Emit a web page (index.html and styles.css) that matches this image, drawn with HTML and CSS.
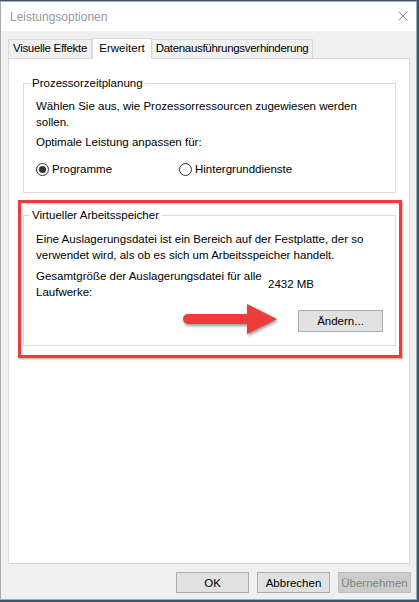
FILE: index.html
```html
<!DOCTYPE html>
<html lang="de">
<head>
<meta charset="utf-8">
<title>Leistungsoptionen</title>
<link rel="stylesheet" href="styles.css">
</head>
<body>
<div class="window">
  <div class="titlebar">
    <span class="title">Leistungsoptionen</span>
    <svg class="close" width="10" height="10" viewBox="0 0 10 10"><path d="M0.5 0.5L9.5 9.5M9.5 0.5L0.5 9.5" stroke="#8f8f8f" stroke-width="1" fill="none"/></svg>
  </div>
  <div class="dialog">
    <div class="tabs">
      <div class="tab tab-visual">Visuelle Effekte</div>
      <div class="tab tab-active">Erweitert</div>
      <div class="tab tab-dep">Datenausführungsverhinderung</div>
    </div>
    <div class="panel">
      <fieldset class="group group-cpu">
        <legend>Prozessorzeitplanung</legend>
        <p class="text">Wählen Sie aus, wie Prozessorressourcen zugewiesen werden sollen.</p>
        <p class="text text-follow">Optimale Leistung anpassen für:</p>
        <div class="radios">
          <label class="radio radio-first"><span class="dot dot-checked"></span>Programme</label>
          <label class="radio"><span class="dot"></span>Hintergrunddienste</label>
        </div>
      </fieldset>
      <div class="highlight">
        <fieldset class="group group-vm">
          <legend>Virtueller Arbeitsspeicher</legend>
          <p class="text">Eine Auslagerungsdatei ist ein Bereich auf der Festplatte, der so verwendet wird, als ob es sich um Arbeitsspeicher handelt.</p>
          <div class="size-row">
            <span class="size-label">Gesamtgröße der Auslagerungsdatei für alle Laufwerke:</span>
            <span class="size-value">2432 MB</span>
          </div>
          <div class="btn-row"><button class="btn btn-change">Ändern...</button></div>
        </fieldset>
        <svg class="arrow" width="100" height="38" viewBox="0 0 100 38">
          <g class="arrow-shape">
            <rect x="2" y="12" width="68" height="10" rx="5" ry="5" fill="#ee3b3b"/>
            <path d="M66 2 L96 17 L66 32 Z" fill="#ee3b3b"/>
          </g>
        </svg>
      </div>
    </div>
    <div class="footer">
      <button class="btn btn-foot">OK</button>
      <button class="btn btn-foot">Abbrechen</button>
      <button class="btn btn-foot" disabled>Übernehmen</button>
    </div>
  </div>
</div>
</body>
</html>
```

FILE: styles.css
```css
html, body {
  margin: 0;
  padding: 0;
  background: #3d5670;
  height: 602px;
  overflow: hidden;
}

body {
  font-family: "Liberation Sans", Arial, sans-serif;
  font-size: 11.5px;
  color: #000;
}

.window {
  box-sizing: border-box;
  width: 417px;
  height: 599px;
  margin-top: 1px;
  border: 1px solid #aaaaaa;
  background: #f0f0f0;
  display: flex;
  flex-direction: column;
}

.titlebar {
  height: 29px;
  flex: none;
  background: #ffffff;
  display: flex;
  align-items: center;
  justify-content: space-between;
  padding: 0 8px 0 9px;
}

.title {
  font-size: 12px;
  color: #999999;
  line-height: 16px;
}

.close {
  display: block;
  margin-bottom: 1px;
}

.dialog {
  flex: 1;
  display: flex;
  flex-direction: column;
  padding: 7px 6px 6px 7px;
}

.tabs {
  display: flex;
  align-items: flex-end;
  height: 21px;
  margin-bottom: -1px;
  position: relative;
  z-index: 1;
}

.tab {
  box-sizing: border-box;
  height: 19px;
  border: 1px solid #d9d9d9;
  border-bottom: none;
  background: #f0f0f0;
  text-align: center;
  white-space: nowrap;
  letter-spacing: -0.3px;
  line-height: 17px;
  margin-bottom: 1px;
}

.tab-visual {
  width: 84px;
}

.tab-active {
  width: 60px;
  height: 21px;
  background: #ffffff;
  line-height: 18px;
  margin-bottom: 0;
  letter-spacing: 0;
}

.tab-dep {
  width: 161px;
  border-left: none;
}

.panel {
  box-sizing: border-box;
  height: 506px;
  border: 1px solid #d9d9d9;
  background: #ffffff;
  padding-top: 16px;
}

.group {
  margin: 0 13px 0 14px;
  padding: 7px 12px 15px 12px;
  border: 1px solid #dcdcdc;
  min-width: 0;
}

.group legend {
  padding: 0 2px;
  margin-left: -6px;
  line-height: 16px;
}

.text {
  margin: 0;
  line-height: 16px;
}

.text-follow {
  margin-top: 4px;
}

.radios {
  display: flex;
  align-items: center;
  height: 16px;
  margin-top: 11px;
}

.radio {
  display: flex;
  align-items: center;
  line-height: 16px;
}

.radio-first {
  width: 143px;
}

.dot {
  box-sizing: border-box;
  width: 13px;
  height: 13px;
  border: 1px solid #333333;
  border-radius: 50%;
  margin-right: 3px;
  display: flex;
  align-items: center;
  justify-content: center;
  background: #ffffff;
}

.dot-checked::after {
  content: "";
  width: 7px;
  height: 7px;
  border-radius: 50%;
  background: #333333;
}

.highlight {
  position: relative;
  margin: 7px 7px 0 9px;
  border: 3px solid #ec3d3d;
  padding: 4px 3px 9px 2px;
  box-shadow: 1px 1px 2px rgba(0, 0, 0, 0.35), inset 1px 1px 2px rgba(0, 0, 0, 0.2);
}

.highlight .group {
  margin: 0;
  padding: 8px 12px 13px 12px;
}

.size-row {
  display: flex;
  align-items: center;
  margin-top: 5px;
}

.size-label {
  width: 232px;
  line-height: 16px;
}

.size-value {
  line-height: 16px;
}

.btn-row {
  display: flex;
  justify-content: flex-end;
  margin-top: 10px;
}

.btn {
  box-sizing: border-box;
  font-family: "Liberation Sans", Arial, sans-serif;
  font-size: 11.5px;
  color: #000;
  background: #e1e1e1;
  border: 1px solid #adadad;
  padding: 0;
  margin: 0;
}

.btn-change {
  width: 85px;
  height: 22px;
}

.btn:disabled {
  background: #cccccc;
  border-color: #bfbfbf;
  color: #838383;
}

.arrow {
  position: absolute;
  left: 160px;
  top: 99px;
  overflow: visible;
}

.arrow-shape {
  filter: drop-shadow(1px 2px 1.5px rgba(0, 0, 0, 0.4));
}

.footer {
  display: flex;
  justify-content: flex-end;
  gap: 8px;
  margin-top: 8px;
  margin-right: -1px;
}

.btn-foot {
  width: 73px;
  height: 21px;
}
```
